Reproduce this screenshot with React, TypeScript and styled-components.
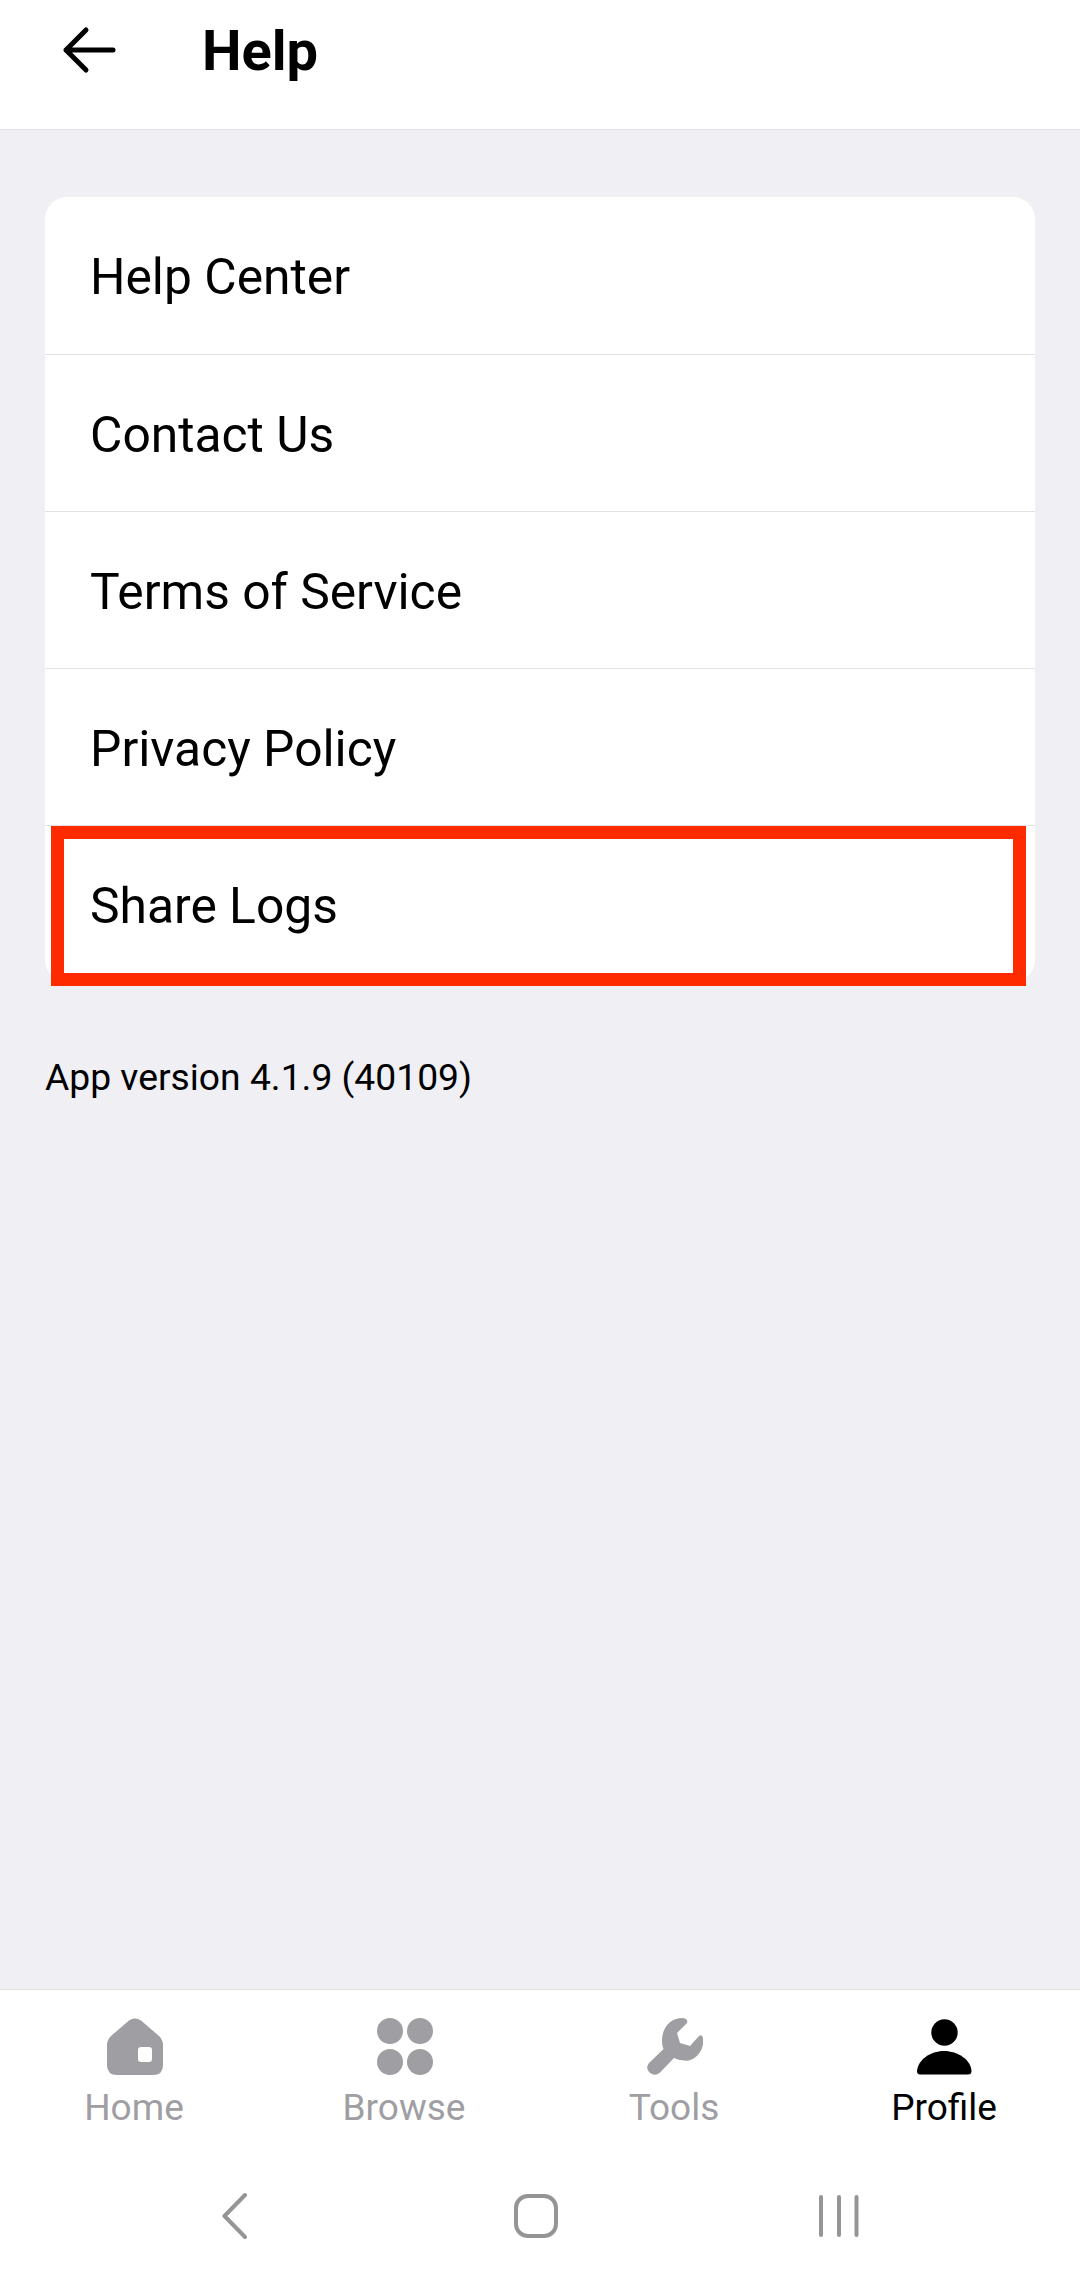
import React from 'react'
import styled, { createGlobalStyle } from 'styled-components'

const GlobalStyle = createGlobalStyle`
  html, body {
    margin: 0;
    padding: 0;
    background: #efeff4;
  }
  * {
    box-sizing: border-box;
  }
`

const menuItems = ['Help Center', 'Contact Us', 'Terms of Service', 'Privacy Policy', 'Share Logs']

const HomeIcon = () => (
  <svg width='56' height='57' viewBox='0 0 56 57'>
    <path
      fillRule='evenodd'
      fill='currentColor'
      d='M22 2.5Q28 -1.5 34 2.5L52 18Q56 22 56 27V47Q56 57 46 57H10Q0 57 0 47V27Q0 22 4 18ZM34 29Q31 29 31 32V41Q31 44 34 44H42Q45 44 45 41V32Q45 29 42 29Z'
    />
  </svg>
)

const BrowseIcon = () => (
  <svg width='56' height='57' viewBox='0 0 56 57' fill='currentColor'>
    <ellipse cx='13' cy='13' rx='13' ry='13' />
    <ellipse cx='43' cy='13' rx='13' ry='13' />
    <ellipse cx='13' cy='44' rx='13' ry='13' />
    <ellipse cx='43' cy='44' rx='13' ry='13' />
  </svg>
)

const ToolsIcon = () => (
  <svg width='56' height='57' viewBox='0 0 56 57'>
    <path
      fill='currentColor'
      d='M39 1Q41 3 40 5L30 15L33 25L43 28L52 18Q55 16 56 20C58 33 47 44 37 42.5Q31 42 27 40L13 54.5Q8 59 2.5 54.5Q-2 50 2 45L16.5 31C12 20 17 0 36 0Z'
    />
  </svg>
)

const ProfileIcon = () => (
  <svg width='56' height='57' viewBox='0 0 56 57' fill='currentColor'>
    <circle cx='27.5' cy='14.5' r='13.2' />
    <path d='M3 56.5Q0 56.5 0 53C1 42 13 33 27 33C41 33 54 42 54.5 53Q54.5 56.5 51 56.5Z' />
  </svg>
)

const tabs = [
  { label: 'Home', icon: <HomeIcon /> },
  { label: 'Browse', icon: <BrowseIcon /> },
  { label: 'Tools', icon: <ToolsIcon /> },
  { label: 'Profile', icon: <ProfileIcon />, active: true }
]

const App: React.FC = () => {
  return (
    <Screen>
      <GlobalStyle />
      <Header>
        <BackButton>
          <svg width='58' height='50' viewBox='0 0 58 50' fill='none'>
            <path
              d='M26 5L6 25L26 45M6 25H53'
              stroke='#000'
              strokeWidth='5'
              strokeLinecap='round'
              strokeLinejoin='round'
            />
          </svg>
        </BackButton>
        <Title>Help</Title>
      </Header>

      <Content>
        <Card>
          {menuItems.map(item => (
            <MenuRow key={item}>
              {item}
              {item === 'Share Logs' && <Highlight />}
            </MenuRow>
          ))}
        </Card>
        <Version>App version 4.1.9 (40109)</Version>
      </Content>

      <TabBar>
        {tabs.map(tab => (
          <Tab key={tab.label} $active={tab.active}>
            {tab.icon}
            <TabLabel>{tab.label}</TabLabel>
          </Tab>
        ))}
      </TabBar>

      <SystemNav>
        <svg width='30' height='48' viewBox='0 0 30 48' fill='none'>
          <path d='M23 3L2.5 24L23 45' stroke='#959595' strokeWidth='4' strokeLinecap='round' strokeLinejoin='round' />
        </svg>
        <svg width='48' height='48' viewBox='0 0 48 48' fill='none'>
          <rect x='6' y='4' width='40' height='40' rx='12' stroke='#959595' strokeWidth='4' />
        </svg>
        <svg width='44' height='48' viewBox='0 0 44 48' fill='#959595'>
          <rect x='3' y='3' width='4' height='42' rx='2' />
          <rect x='21' y='3' width='4' height='42' rx='2' />
          <rect x='38.5' y='3' width='4' height='42' rx='2' />
        </svg>
      </SystemNav>
    </Screen>
  )
}

const Screen = styled.div`
  width: 1080px;
  height: 2283px;
  display: flex;
  flex-direction: column;
  background: #efeff4;
  font-family: Roboto, 'Liberation Sans', sans-serif;
  color: #000;
  overflow: hidden;
`

const Header = styled.header`
  height: 130px;
  flex: none;
  display: flex;
  align-items: flex-start;
  background: #fff;
  border-bottom: 1px solid #e2e2e5;
`

const BackButton = styled.div`
  width: 202px;
  height: 100px;
  flex: none;
  padding: 25px 0 0 60px;
  line-height: 0;
`

const Title = styled.h1`
  margin: 0;
  font-size: 56px;
  line-height: 102px;
  font-weight: 700;
`

const Content = styled.main`
  flex: 1;
  padding: 67px 45px 0;
`

const Card = styled.section`
  background: #fff;
  border-radius: 22px;
`

const MenuRow = styled.div`
  position: relative;
  height: 157px;
  display: flex;
  align-items: center;
  padding: 3px 0 0 45px;
  font-size: 49.75px;
  border-top: 1px solid #e2e2e5;

  &:first-child {
    padding-top: 2px;
    border-top: none;
  }
`

const Highlight = styled.div`
  position: absolute;
  top: 0;
  left: 6px;
  right: 9px;
  bottom: -4px;
  border: 13px solid #ff2b00;
`

const Version = styled.p`
  margin: 71px 0 0;
  font-size: 37.25px;
  line-height: 48px;
`

const TabBar = styled.nav`
  height: 163px;
  flex: none;
  display: grid;
  grid-template-columns: repeat(4, 1fr);
  padding-top: 28px;
  background: #fff;
  border-top: 1px solid #e2e2e5;
`

const Tab = styled.div<{ $active?: boolean }>`
  display: flex;
  flex-direction: column;
  align-items: center;
  color: ${({ $active }) => ($active ? '#000' : '#9e9ea3')};
`

const TabLabel = styled.span`
  margin: 7px 2px 0 0;
  font-size: 37px;
  line-height: 52px;
`

const SystemNav = styled.div`
  height: 131px;
  flex: none;
  display: flex;
  align-items: flex-start;
  justify-content: space-between;
  padding: 40px 220px 0 222px;
  background: #fff;
`

export default App
